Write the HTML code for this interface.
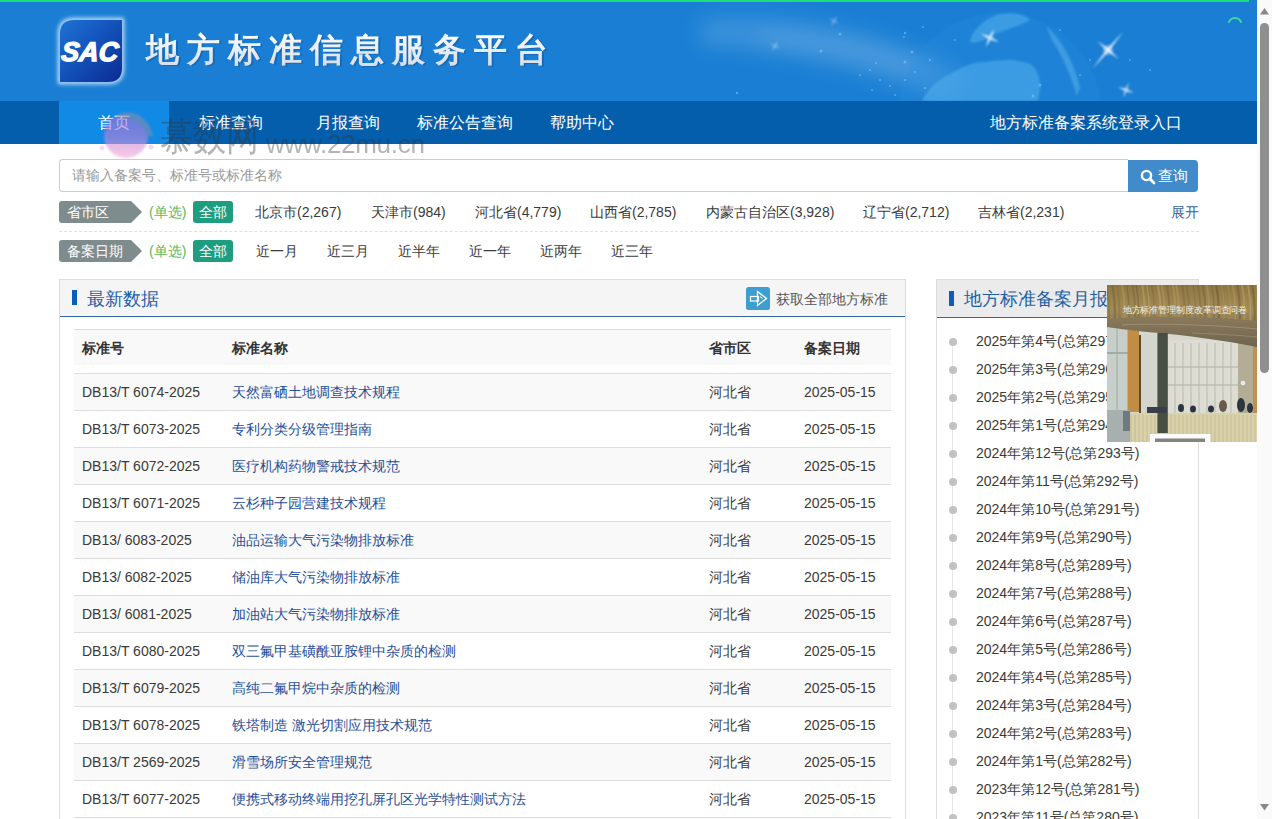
<!DOCTYPE html>
<html><head><meta charset="utf-8">
<style>
*{box-sizing:border-box;margin:0;padding:0}
html,body{width:1272px;height:819px;overflow:hidden;background:#fff}
body{font-family:"Liberation Sans",sans-serif;font-size:14px;color:#333;position:relative}
.abs{position:absolute}
#hdr{position:absolute;left:0;top:0;width:1257px;height:101px;background:#1a7fd4;overflow:hidden}
#topbar{position:absolute;left:0;top:0;width:1249px;height:2px;background:#22dc7c}
#nav{position:absolute;left:0;top:101px;width:1257px;height:43px;background:#045eab}
#nav .it{position:absolute;top:0;height:43px;line-height:44px;color:#fff;font-size:16px;white-space:nowrap}
#nav .act{background:#118ae6}
#sb{position:absolute;left:1257px;top:0;width:15px;height:819px;background:#fafafa}
#sbthumb{position:absolute;left:1260px;top:23px;width:9px;height:350px;background:#8f8f8f;border-radius:5px}
.search{position:absolute;left:59px;top:159px;width:1069px;height:33px;border:1px solid #ccc;border-right:none;border-radius:4px 0 0 4px;color:#999;font-size:14px;line-height:31px;padding-left:12px}
.sbtn{position:absolute;left:1128px;top:160px;width:70px;height:32px;background:#428bca;border-radius:0 4px 4px 0;color:#fff;font-size:14px;line-height:33px}
.tag{position:absolute;height:22px;line-height:22px;background:#7f8c8d;color:#fff;font-size:14px;padding-left:8px;border-radius:3px 0 0 3px}
.tag:after{content:"";position:absolute;right:-11px;top:0;border-left:11px solid #7f8c8d;border-top:11px solid transparent;border-bottom:11px solid transparent}
.dan{position:absolute;color:#5cb85c;font-size:14px;line-height:22px}
.all{position:absolute;width:40px;height:22px;line-height:22px;background:#1f9e7f;color:#fff;border-radius:3px;text-align:center;font-size:14px}
.fi{position:absolute;font-size:14px;line-height:22px;color:#3a3a3a;white-space:nowrap}
.dash{position:absolute;left:59px;top:231px;width:1140px;height:0;border-top:1px dashed #e0e0e0}
.panel{position:absolute;top:279px;border:1px solid #ddd;border-bottom:none;height:560px}
.ph{position:absolute;left:0;top:0;right:0;height:38px;border-bottom:1px solid #30679f}
.pbar{position:absolute;width:5px;height:15px;background:#0d5db8}
.ptitle{position:absolute;font-size:18px;color:#1d5fa6;line-height:24px;white-space:nowrap}
table{position:absolute;left:14px;top:49px;width:817px;border-collapse:collapse}
.row{position:absolute;left:14px;width:817px;height:37px;border-top:1px solid #ddd}
.row span{position:absolute;top:0;line-height:36px;white-space:nowrap;font-size:14px}
.row .c1{left:8px;color:#3a3a3a}
.row .c2{left:158px;color:#1f5098}
.row .c3{left:635px;color:#3a3a3a}
.row .c4{left:730px;color:#3a3a3a}
.odd{background:#f9f9f9}
.thead{position:absolute;left:14px;top:49px;width:817px;height:36px;background:#f9f9f9;border-top:1px solid #ddd}
.thead span{position:absolute;top:0;line-height:36px;font-weight:bold;font-size:14px;color:#333}
.vline{position:absolute;left:15px;top:62px;width:1px;height:520px;background:#e6e6e6}
.tl{position:absolute;font-size:14px;color:#3a3a3a;white-space:nowrap;line-height:20px}
.wmt{position:absolute;color:#333;opacity:0.36;white-space:nowrap;font-weight:300}
.dot{position:absolute;width:8px;height:8px;border-radius:4px;background:#c2c2c2}
</style></head><body>
<div id="hdr">
  <svg width="1257" height="101" style="position:absolute;left:0;top:0">
    <defs>
      <linearGradient id="streak" x1="0" y1="0" x2="1" y2="0.3">
        <stop offset="0" stop-color="#fff" stop-opacity="0"/>
        <stop offset="0.5" stop-color="#fff" stop-opacity="0.12"/>
        <stop offset="1" stop-color="#fff" stop-opacity="0"/>
      </linearGradient>
      <radialGradient id="glob" cx="0.4" cy="0.6" r="0.6">
        <stop offset="0" stop-color="#5ab4f0" stop-opacity="0.55"/>
        <stop offset="1" stop-color="#3a9ae8" stop-opacity="0.15"/>
      </radialGradient>
      <radialGradient id="spark" cx="0.5" cy="0.5" r="0.5">
        <stop offset="0" stop-color="#fff" stop-opacity="1"/>
        <stop offset="1" stop-color="#fff" stop-opacity="0"/>
      </radialGradient>
      <linearGradient id="logog" x1="0" y1="0" x2="1" y2="1">
        <stop offset="0" stop-color="#1e74d6"/>
        <stop offset="0.5" stop-color="#1250b8"/>
        <stop offset="1" stop-color="#0c2a92"/>
      </linearGradient>
      <linearGradient id="titleg" x1="0" y1="0" x2="0" y2="1">
        <stop offset="0" stop-color="#ffffff"/>
        <stop offset="1" stop-color="#d6dde6"/>
      </linearGradient>
    </defs>
    <filter id="soft" x="-50%" y="-50%" width="200%" height="200%"><feGaussianBlur stdDeviation="10"/></filter>
    <filter id="soft3" x="-50%" y="-50%" width="200%" height="200%"><feGaussianBlur stdDeviation="1.2"/></filter>
    <path d="M700 20 C 780 10, 880 30, 960 70 L 950 101 C 870 70, 780 50, 700 45 Z" fill="#fff" opacity="0.14" filter="url(#soft)"/>
    <path d="M760 30 C 820 30, 880 45, 930 65 L 925 80 C 870 60, 810 48, 760 45 Z" fill="#fff" opacity="0.08" filter="url(#soft)"/>
    <circle cx="1000" cy="115" r="102" fill="#2a8fe0" opacity="0.25" filter="url(#soft3)"/>
    <g fill="#56b2ee" opacity="0.55" filter="url(#soft3)">
      <path d="M922 101 C 928 88, 938 80, 950 74 C 960 68, 972 62, 985 62 C 1000 60, 1015 58, 1030 64 C 1040 70, 1042 85, 1038 101 Z"/>
      <path d="M970 42 C 972 30, 985 18, 1000 14 C 1012 12, 1025 14, 1030 20 C 1020 26, 1005 30, 995 34 C 985 40, 978 44, 970 42 Z"/>
      <path d="M1046 26 C 1062 40, 1074 62, 1080 88 L 1077 96 C 1070 72, 1060 52, 1052 40 Z"/>
    </g>
    <g fill="#fff" filter="url(#soft3)">
      <path d="M990 28 L991.5 36.5 L1000 38 L991.5 39.5 L990 48 L988.5 39.5 L980 38 L988.5 36.5 Z" opacity="0.75" transform="rotate(25 990 38)"/>
      <path d="M1108 36 L1109.3 48.7 L1132 50 L1109.3 51.3 L1108 64 L1106.7 51.3 L1084 50 L1106.7 48.7 Z" opacity="0.85" transform="rotate(-50 1108 50)"/>
      <path d="M1126 82 L1127 88.5 L1134 90 L1127 91.5 L1126 98 L1125 91.5 L1118 90 L1125 88.5 Z" opacity="0.7" transform="rotate(20 1126 90)"/>
      <path d="M775 40 L776 45 L781 46 L776 47 L775 52 L774 47 L769 46 L774 45 Z" opacity="0.35" transform="rotate(30 775 46)"/>
      <path d="M834 15 L835 20 L840 21 L835 22 L834 27 L833 22 L828 21 L833 20 Z" opacity="0.35" transform="rotate(30 834 21)"/>
    </g>
    <circle cx="1108" cy="50" r="5" fill="#fff" opacity="0.35" filter="url(#soft3)"/>
    <g fill="#9cd4ff" opacity="0.45">
      <circle cx="821" cy="51" r="1.5"/><circle cx="840" cy="34" r="1.5"/><circle cx="905" cy="33" r="1.2"/><circle cx="912" cy="52" r="1.5"/>
      <circle cx="905" cy="62" r="1.5"/><circle cx="876" cy="63" r="1"/><circle cx="870" cy="70" r="1"/><circle cx="860" cy="75" r="1"/>
      <circle cx="880" cy="80" r="1"/><circle cx="890" cy="86" r="1"/><circle cx="872" cy="90" r="1"/><circle cx="895" cy="95" r="1"/>
      <circle cx="905" cy="80" r="1"/><circle cx="915" cy="72" r="1"/><circle cx="925" cy="88" r="1.2"/><circle cx="737" cy="93" r="1.2"/>
      <circle cx="904" cy="37" r="1"/><circle cx="930" cy="60" r="1.2"/><circle cx="1040" cy="85" r="1.5"/><circle cx="1033" cy="96" r="1.5"/>
      <circle cx="1090" cy="60" r="1"/><circle cx="1080" cy="75" r="1"/><circle cx="1130" cy="60" r="1"/><circle cx="1150" cy="70" r="1"/>
      <circle cx="923" cy="27" r="1"/><circle cx="955" cy="40" r="1"/><circle cx="1060" cy="30" r="1"/>
    </g>
    <!-- logo glow -->
    <filter id="blur2" x="-30%" y="-30%" width="160%" height="160%"><feGaussianBlur stdDeviation="2"/></filter>
    <path d="M74 20 L122 20 L122 68 Q122 82 108 82 L60 82 L60 34 Q60 20 74 20 Z" fill="none" stroke="#e8f6ff" stroke-width="4" filter="url(#blur2)" opacity="0.9"/>
    <path d="M74 20 L122 20 L122 68 Q122 82 108 82 L60 82 L60 34 Q60 20 74 20 Z" fill="url(#logog)"/>
    <text x="63" y="61.5" font-family="Liberation Sans" font-weight="bold" font-style="italic" font-size="27" fill="#fff" stroke="#fff" stroke-width="1.3" textLength="57" lengthAdjust="spacingAndGlyphs" transform="skewX(-6) translate(4,0)">SAC</text>
    <text x="147.5" y="62" font-size="33" font-weight="bold" fill="#00306a" opacity="0.25" letter-spacing="8" font-family="Liberation Sans">地方标准信息服务平台</text>
    <text x="146" y="60.5" font-size="33" font-weight="bold" fill="url(#titleg)" letter-spacing="8" font-family="Liberation Sans">地方标准信息服务平台</text>
    <path d="M1229 22 A 6.5 6.5 0 0 1 1241 22" fill="none" stroke="#3bd6a2" stroke-width="2" stroke-linecap="round"/>
  </svg>
  <div id="topbar"></div>
</div>
<div id="nav">
  <div class="it act" style="left:59px;width:110px;text-align:center;padding-right:0">首页</div>
  <div class="it" style="left:199px">标准查询</div>
  <div class="it" style="left:316px">月报查询</div>
  <div class="it" style="left:417px">标准公告查询</div>
  <div class="it" style="left:550px">帮助中心</div>
  <div class="it" style="left:990px">地方标准备案系统登录入口</div>
</div>
<div id="sb"></div>
<div id="sbthumb"></div>
<svg width="15" height="819" style="position:absolute;left:1257px;top:0"><path d="M3 14.5 L7.5 8 L12 14.5 Z" fill="#888"/><path d="M3 804 L7.5 810.5 L12 804 Z" fill="#888"/></svg>

<div class="search">请输入备案号、标准号或标准名称</div>
<div class="sbtn"><svg width="16" height="16" style="position:absolute;left:12px;top:8.5px"><circle cx="6.5" cy="6.5" r="4.6" fill="none" stroke="#fff" stroke-width="2.4"/><path d="M9.8 9.8 L14 14" stroke="#fff" stroke-width="2.8" stroke-linecap="round"/></svg><span style="position:absolute;left:30px;top:0px;font-size:14.5px;line-height:33px">查询</span></div>

<div class="tag" style="left:59px;top:201px;width:72px">省市区</div>
<div class="dan" style="left:149px;top:201px">(单选)</div>
<div class="all" style="left:193px;top:201px">全部</div>
<div class="fi" style="left:255px;top:201px">北京市(2,267)</div>
<div class="fi" style="left:371px;top:201px">天津市(984)</div>
<div class="fi" style="left:475px;top:201px">河北省(4,779)</div>
<div class="fi" style="left:590px;top:201px">山西省(2,785)</div>
<div class="fi" style="left:706px;top:201px">内蒙古自治区(3,928)</div>
<div class="fi" style="left:863px;top:201px">辽宁省(2,712)</div>
<div class="fi" style="left:978px;top:201px">吉林省(2,231)</div>
<div class="fi" style="left:1171px;top:201px;color:#356699">展开</div>
<div class="dash"></div>

<div class="tag" style="left:59px;top:240px;width:72px">备案日期</div>
<div class="dan" style="left:149px;top:240px">(单选)</div>
<div class="all" style="left:193px;top:240px">全部</div>
<div class="fi" style="left:256px;top:240px">近一月</div>
<div class="fi" style="left:327px;top:240px">近三月</div>
<div class="fi" style="left:398px;top:240px">近半年</div>
<div class="fi" style="left:469px;top:240px">近一年</div>
<div class="fi" style="left:540px;top:240px">近两年</div>
<div class="fi" style="left:611px;top:240px">近三年</div>

<div class="panel" style="left:59px;width:847px">
  <div class="ph" style="background:#f5f5f5;height:37px">
    <div class="pbar" style="left:12px;top:10px"></div>
    <div class="ptitle" style="left:27px;top:7px">最新数据</div>
    <svg width="25" height="24" style="position:absolute;left:686px;top:7px"><rect x="0" y="0" width="24" height="23" rx="2.5" fill="#3d9fd1"/><rect x="4.5" y="9.5" width="8" height="4.5" fill="none" stroke="#fff" stroke-width="1.2"/><path d="M11.5 4.5 L20.5 11.5 L11.5 18.5 Z" fill="none" stroke="#fff" stroke-width="1.3"/><path d="M14 9.5 L16.5 11.5" stroke="#fff" stroke-width="1"/></svg><div class="ptitle" style="left:716px;top:7px;font-size:14px;color:#555">获取全部地方标准</div>
  </div>
<div class="thead"><span style="left:8px">标准号</span><span style="left:158px">标准名称</span><span style="left:635px">省市区</span><span style="left:730px">备案日期</span></div>
<div class="row odd" style="top:93px"><span class="c1">DB13/T 6074-2025</span><span class="c2">天然富硒土地调查技术规程</span><span class="c3">河北省</span><span class="c4">2025-05-15</span></div>
<div class="row" style="top:130px"><span class="c1">DB13/T 6073-2025</span><span class="c2">专利分类分级管理指南</span><span class="c3">河北省</span><span class="c4">2025-05-15</span></div>
<div class="row odd" style="top:167px"><span class="c1">DB13/T 6072-2025</span><span class="c2">医疗机构药物警戒技术规范</span><span class="c3">河北省</span><span class="c4">2025-05-15</span></div>
<div class="row" style="top:204px"><span class="c1">DB13/T 6071-2025</span><span class="c2">云杉种子园营建技术规程</span><span class="c3">河北省</span><span class="c4">2025-05-15</span></div>
<div class="row odd" style="top:241px"><span class="c1">DB13/ 6083-2025</span><span class="c2">油品运输大气污染物排放标准</span><span class="c3">河北省</span><span class="c4">2025-05-15</span></div>
<div class="row" style="top:278px"><span class="c1">DB13/ 6082-2025</span><span class="c2">储油库大气污染物排放标准</span><span class="c3">河北省</span><span class="c4">2025-05-15</span></div>
<div class="row odd" style="top:315px"><span class="c1">DB13/ 6081-2025</span><span class="c2">加油站大气污染物排放标准</span><span class="c3">河北省</span><span class="c4">2025-05-15</span></div>
<div class="row" style="top:352px"><span class="c1">DB13/T 6080-2025</span><span class="c2">双三氟甲基磺酰亚胺锂中杂质的检测</span><span class="c3">河北省</span><span class="c4">2025-05-15</span></div>
<div class="row odd" style="top:389px"><span class="c1">DB13/T 6079-2025</span><span class="c2">高纯二氟甲烷中杂质的检测</span><span class="c3">河北省</span><span class="c4">2025-05-15</span></div>
<div class="row" style="top:426px"><span class="c1">DB13/T 6078-2025</span><span class="c2">铁塔制造 激光切割应用技术规范</span><span class="c3">河北省</span><span class="c4">2025-05-15</span></div>
<div class="row odd" style="top:463px"><span class="c1">DB13/T 2569-2025</span><span class="c2">滑雪场所安全管理规范</span><span class="c3">河北省</span><span class="c4">2025-05-15</span></div>
<div class="row" style="top:500px"><span class="c1">DB13/T 6077-2025</span><span class="c2">便携式移动终端用挖孔屏孔区光学特性测试方法</span><span class="c3">河北省</span><span class="c4">2025-05-15</span></div>
<div class="row odd" style="top:537px"><span class="c1">DB13/T 6076-2025</span><span class="c2">测试</span><span class="c3">河北省</span><span class="c4">2025-05-15</span></div>
</div>

<div class="panel" style="left:936px;width:263px">
  <div class="ph" style="background:#ebebeb">
    <div class="pbar" style="left:12px;top:11px"></div>
    <div class="ptitle" style="left:27px;top:7px">地方标准备案月报</div>
  </div>
<div class="vline"></div>
<div class="dot" style="left:12px;top:58px"></div><div class="tl" style="left:39px;top:51px">2025年第4号(总第297号)</div>
<div class="dot" style="left:12px;top:86px"></div><div class="tl" style="left:39px;top:79px">2025年第3号(总第296号)</div>
<div class="dot" style="left:12px;top:114px"></div><div class="tl" style="left:39px;top:107px">2025年第2号(总第295号)</div>
<div class="dot" style="left:12px;top:142px"></div><div class="tl" style="left:39px;top:135px">2025年第1号(总第294号)</div>
<div class="dot" style="left:12px;top:170px"></div><div class="tl" style="left:39px;top:163px">2024年第12号(总第293号)</div>
<div class="dot" style="left:12px;top:198px"></div><div class="tl" style="left:39px;top:191px">2024年第11号(总第292号)</div>
<div class="dot" style="left:12px;top:226px"></div><div class="tl" style="left:39px;top:219px">2024年第10号(总第291号)</div>
<div class="dot" style="left:12px;top:254px"></div><div class="tl" style="left:39px;top:247px">2024年第9号(总第290号)</div>
<div class="dot" style="left:12px;top:282px"></div><div class="tl" style="left:39px;top:275px">2024年第8号(总第289号)</div>
<div class="dot" style="left:12px;top:310px"></div><div class="tl" style="left:39px;top:303px">2024年第7号(总第288号)</div>
<div class="dot" style="left:12px;top:338px"></div><div class="tl" style="left:39px;top:331px">2024年第6号(总第287号)</div>
<div class="dot" style="left:12px;top:366px"></div><div class="tl" style="left:39px;top:359px">2024年第5号(总第286号)</div>
<div class="dot" style="left:12px;top:394px"></div><div class="tl" style="left:39px;top:387px">2024年第4号(总第285号)</div>
<div class="dot" style="left:12px;top:422px"></div><div class="tl" style="left:39px;top:415px">2024年第3号(总第284号)</div>
<div class="dot" style="left:12px;top:450px"></div><div class="tl" style="left:39px;top:443px">2024年第2号(总第283号)</div>
<div class="dot" style="left:12px;top:478px"></div><div class="tl" style="left:39px;top:471px">2024年第1号(总第282号)</div>
<div class="dot" style="left:12px;top:506px"></div><div class="tl" style="left:39px;top:499px">2023年第12号(总第281号)</div>
<div class="dot" style="left:12px;top:534px"></div><div class="tl" style="left:39px;top:527px">2023年第11号(总第280号)</div>
</div>


<!-- overlay ad image -->
<div id="ad" style="position:absolute;left:1107px;top:285px;width:150px;height:157px;overflow:hidden;background:#cfd2c8">
<svg width="150" height="157" style="position:absolute;left:0;top:0">
  <defs>
    <linearGradient id="ceil" x1="0" y1="0" x2="0" y2="1">
      <stop offset="0" stop-color="#8f7744"/>
      <stop offset="0.6" stop-color="#a38b56"/>
      <stop offset="1" stop-color="#8b7a58"/>
    </linearGradient>
    <linearGradient id="lip" x1="0" y1="0" x2="0" y2="1">
      <stop offset="0" stop-color="#8a7a5c"/>
      <stop offset="1" stop-color="#6f6450"/>
    </linearGradient>
  </defs>
  <rect x="0" y="0" width="150" height="157" fill="#d6d8ce"/>
  <rect x="0" y="40" width="21" height="90" fill="#c6cfc9"/>
  <line x1="0" y1="68" x2="21" y2="68" stroke="#8a948c" stroke-width="1.2"/><line x1="10" y1="40" x2="10" y2="130" stroke="#a0aaa2" stroke-width="1"/>
  <rect x="20.5" y="45" width="11.5" height="82" fill="#c08d42"/>
  <rect x="32" y="50" width="2" height="78" fill="#5a4a30"/>
  <rect x="34" y="50" width="17" height="78" fill="#d2d6cc"/>
  <rect x="61" y="55" width="70" height="73" fill="#dcdcd2"/>
  <line x1="68" y1="58" x2="68" y2="128" stroke="#b9bcb0" stroke-width="1"/>
  <line x1="76" y1="58" x2="76" y2="128" stroke="#b9bcb0" stroke-width="1"/>
  <line x1="84" y1="58" x2="84" y2="128" stroke="#b9bcb0" stroke-width="1"/>
  <line x1="92" y1="58" x2="92" y2="128" stroke="#b9bcb0" stroke-width="1"/>
  <line x1="100" y1="58" x2="100" y2="128" stroke="#b9bcb0" stroke-width="1"/>
  <line x1="108" y1="58" x2="108" y2="128" stroke="#b9bcb0" stroke-width="1"/>
  <line x1="116" y1="58" x2="116" y2="128" stroke="#b9bcb0" stroke-width="1"/>
  <line x1="124" y1="58" x2="124" y2="128" stroke="#b9bcb0" stroke-width="1"/>
  <line x1="61" y1="82" x2="131" y2="82" stroke="#b0b2a4" stroke-width="1.2"/>
  <line x1="61" y1="100" x2="131" y2="100" stroke="#b0b2a4" stroke-width="1.2"/>
  <rect x="131" y="55" width="15" height="75" fill="#b3ad95"/>
  <rect x="146" y="55" width="4" height="75" fill="#c09050"/>
  <circle cx="136" cy="98" r="3" fill="#e8e8e0" stroke="#888" stroke-width="0.6"/>
  <path d="M0 0 H150 V40 H0 Z" fill="url(#ceil)"/>
  <path d="M-0.5 0 Q 3.5 20 1.5 40" stroke="#7a6236" stroke-width="1.7" fill="none" opacity="0.36"/>
  <path d="M5.3 0 Q 9.3 20 7.3 40" stroke="#6a5530" stroke-width="2.1" fill="none" opacity="0.43"/>
  <path d="M9.9 0 Q 13.9 20 11.9 40" stroke="#7a6236" stroke-width="1.9" fill="none" opacity="0.31"/>
  <path d="M15.1 0 Q 19.1 20 17.1 40" stroke="#c2a86e" stroke-width="2.0" fill="none" opacity="0.37"/>
  <path d="M19.5 0 Q 23.5 20 21.5 40" stroke="#7a6236" stroke-width="1.6" fill="none" opacity="0.51"/>
  <path d="M25.5 0 Q 29.5 20 27.5 40" stroke="#6a5530" stroke-width="2.1" fill="none" opacity="0.30"/>
  <path d="M29.1 0 Q 33.1 20 31.1 40" stroke="#6a5530" stroke-width="1.3" fill="none" opacity="0.50"/>
  <path d="M35.2 0 Q 39.2 20 37.2 40" stroke="#c2a86e" stroke-width="2.1" fill="none" opacity="0.46"/>
  <path d="M39.8 0 Q 43.8 20 41.8 40" stroke="#c2a86e" stroke-width="1.2" fill="none" opacity="0.54"/>
  <path d="M44.7 0 Q 48.7 20 46.7 40" stroke="#6a5530" stroke-width="1.3" fill="none" opacity="0.29"/>
  <path d="M50.9 0 Q 54.9 20 52.9 40" stroke="#c2a86e" stroke-width="2.0" fill="none" opacity="0.48"/>
  <path d="M54.8 0 Q 58.8 20 56.8 40" stroke="#c2a86e" stroke-width="1.6" fill="none" opacity="0.42"/>
  <path d="M59.8 0 Q 63.8 20 61.8 40" stroke="#7a6236" stroke-width="1.8" fill="none" opacity="0.52"/>
  <path d="M65.9 0 Q 69.9 20 67.9 40" stroke="#b39a62" stroke-width="1.8" fill="none" opacity="0.55"/>
  <path d="M69.3 0 Q 73.3 20 71.3 40" stroke="#b39a62" stroke-width="2.1" fill="none" opacity="0.54"/>
  <path d="M75.1 0 Q 79.1 20 77.1 40" stroke="#7a6236" stroke-width="2.2" fill="none" opacity="0.44"/>
  <path d="M79.5 0 Q 83.5 20 81.5 40" stroke="#6a5530" stroke-width="2.0" fill="none" opacity="0.27"/>
  <path d="M86.0 0 Q 90.0 20 88.0 40" stroke="#6a5530" stroke-width="1.1" fill="none" opacity="0.35"/>
  <path d="M90.8 0 Q 94.8 20 92.8 40" stroke="#6a5530" stroke-width="1.9" fill="none" opacity="0.34"/>
  <path d="M95.7 0 Q 99.7 20 97.7 40" stroke="#6a5530" stroke-width="1.9" fill="none" opacity="0.43"/>
  <path d="M99.8 0 Q 103.8 20 101.8 40" stroke="#b39a62" stroke-width="2.1" fill="none" opacity="0.42"/>
  <path d="M104.6 0 Q 108.6 20 106.6 40" stroke="#7a6236" stroke-width="1.4" fill="none" opacity="0.55"/>
  <path d="M109.2 0 Q 113.2 20 111.2 40" stroke="#6a5530" stroke-width="2.2" fill="none" opacity="0.53"/>
  <path d="M114.6 0 Q 118.6 20 116.6 40" stroke="#b39a62" stroke-width="1.1" fill="none" opacity="0.30"/>
  <path d="M120.7 0 Q 124.7 20 122.7 40" stroke="#b39a62" stroke-width="1.2" fill="none" opacity="0.36"/>
  <path d="M125.7 0 Q 129.7 20 127.7 40" stroke="#c2a86e" stroke-width="1.6" fill="none" opacity="0.39"/>
  <path d="M130.3 0 Q 134.3 20 132.3 40" stroke="#6a5530" stroke-width="2.1" fill="none" opacity="0.44"/>
  <path d="M135.0 0 Q 139.0 20 137.0 40" stroke="#c2a86e" stroke-width="1.9" fill="none" opacity="0.44"/>
  <path d="M140.9 0 Q 144.9 20 142.9 40" stroke="#c2a86e" stroke-width="1.6" fill="none" opacity="0.54"/>
  <path d="M145.1 0 Q 149.1 20 147.1 40" stroke="#6a5530" stroke-width="2.2" fill="none" opacity="0.49"/>
  <path d="M149.6 0 Q 153.6 20 151.6 40" stroke="#c2a86e" stroke-width="1.8" fill="none" opacity="0.43"/>
  <path d="M0 34 C 40 30, 110 32, 150 36 L150 62 C 120 56, 80 50, 40 47 C 20 45, 8 43, 0 42 Z" fill="url(#lip)"/>
  <path d="M15 40 C 50 38, 110 40, 150 44" stroke="#a89878" stroke-width="1" fill="none" opacity="0.7"/>
  <path d="M85 48 C 110 49, 130 50, 150 52" stroke="#b0a080" stroke-width="0.8" fill="none" opacity="0.6"/>
  <rect x="50.4" y="48" width="10.4" height="100" fill="#474e44"/>
  <g fill="#2e3340">
    <ellipse cx="74" cy="123" rx="3" ry="4"/><ellipse cx="86" cy="124" rx="3" ry="3.5"/><ellipse cx="104" cy="124" rx="3" ry="3.5"/>
    <ellipse cx="116" cy="121" rx="4" ry="6" fill="#6a5a4a"/><ellipse cx="134" cy="120" rx="4" ry="7"/><ellipse cx="143" cy="123" rx="3" ry="5"/>
    <rect x="40" y="122" width="20" height="6" fill="#3a3e4a"/>
  </g>
  <rect x="21" y="128" width="129" height="29" fill="#d9d1aa"/>
  <line x1="24" y1="130" x2="24" y2="157" stroke="#bfb48c" stroke-width="1" opacity="0.8"/>
  <line x1="28" y1="130" x2="28" y2="157" stroke="#bfb48c" stroke-width="1" opacity="0.8"/>
  <line x1="32" y1="130" x2="32" y2="157" stroke="#bfb48c" stroke-width="1" opacity="0.8"/>
  <line x1="36" y1="130" x2="36" y2="157" stroke="#bfb48c" stroke-width="1" opacity="0.8"/>
  <line x1="40" y1="130" x2="40" y2="157" stroke="#bfb48c" stroke-width="1" opacity="0.8"/>
  <line x1="44" y1="130" x2="44" y2="157" stroke="#bfb48c" stroke-width="1" opacity="0.8"/>
  <line x1="48" y1="130" x2="48" y2="157" stroke="#bfb48c" stroke-width="1" opacity="0.8"/>
  <line x1="52" y1="130" x2="52" y2="157" stroke="#bfb48c" stroke-width="1" opacity="0.8"/>
  <line x1="56" y1="130" x2="56" y2="157" stroke="#bfb48c" stroke-width="1" opacity="0.8"/>
  <line x1="60" y1="130" x2="60" y2="157" stroke="#bfb48c" stroke-width="1" opacity="0.8"/>
  <line x1="64" y1="130" x2="64" y2="157" stroke="#bfb48c" stroke-width="1" opacity="0.8"/>
  <line x1="68" y1="130" x2="68" y2="157" stroke="#bfb48c" stroke-width="1" opacity="0.8"/>
  <line x1="72" y1="130" x2="72" y2="157" stroke="#bfb48c" stroke-width="1" opacity="0.8"/>
  <line x1="76" y1="130" x2="76" y2="157" stroke="#bfb48c" stroke-width="1" opacity="0.8"/>
  <line x1="80" y1="130" x2="80" y2="157" stroke="#bfb48c" stroke-width="1" opacity="0.8"/>
  <line x1="84" y1="130" x2="84" y2="157" stroke="#bfb48c" stroke-width="1" opacity="0.8"/>
  <line x1="88" y1="130" x2="88" y2="157" stroke="#bfb48c" stroke-width="1" opacity="0.8"/>
  <line x1="92" y1="130" x2="92" y2="157" stroke="#bfb48c" stroke-width="1" opacity="0.8"/>
  <line x1="96" y1="130" x2="96" y2="157" stroke="#bfb48c" stroke-width="1" opacity="0.8"/>
  <line x1="100" y1="130" x2="100" y2="157" stroke="#bfb48c" stroke-width="1" opacity="0.8"/>
  <line x1="104" y1="130" x2="104" y2="157" stroke="#bfb48c" stroke-width="1" opacity="0.8"/>
  <line x1="108" y1="130" x2="108" y2="157" stroke="#bfb48c" stroke-width="1" opacity="0.8"/>
  <line x1="112" y1="130" x2="112" y2="157" stroke="#bfb48c" stroke-width="1" opacity="0.8"/>
  <line x1="116" y1="130" x2="116" y2="157" stroke="#bfb48c" stroke-width="1" opacity="0.8"/>
  <line x1="120" y1="130" x2="120" y2="157" stroke="#bfb48c" stroke-width="1" opacity="0.8"/>
  <line x1="124" y1="130" x2="124" y2="157" stroke="#bfb48c" stroke-width="1" opacity="0.8"/>
  <line x1="128" y1="130" x2="128" y2="157" stroke="#bfb48c" stroke-width="1" opacity="0.8"/>
  <line x1="132" y1="130" x2="132" y2="157" stroke="#bfb48c" stroke-width="1" opacity="0.8"/>
  <line x1="136" y1="130" x2="136" y2="157" stroke="#bfb48c" stroke-width="1" opacity="0.8"/>
  <line x1="140" y1="130" x2="140" y2="157" stroke="#bfb48c" stroke-width="1" opacity="0.8"/>
  <line x1="144" y1="130" x2="144" y2="157" stroke="#bfb48c" stroke-width="1" opacity="0.8"/>
  <line x1="148" y1="130" x2="148" y2="157" stroke="#bfb48c" stroke-width="1" opacity="0.8"/>
  <rect x="0" y="125" width="23" height="32" fill="#a7b0ae"/>
  <rect x="16" y="126" width="7" height="20" fill="#6d7a80"/>
  <rect x="50.4" y="128" width="10.4" height="20" fill="#474e44"/>
  <rect x="43" y="149" width="60.5" height="8" fill="#fbfbfb"/>
  <rect x="48" y="153.5" width="50" height="3.5" fill="#333" opacity="0.6"/>
</svg>
<div style="position:absolute;left:0;top:19px;width:150px;text-align:center;font-size:9.2px;color:#f4f0e8;white-space:nowrap;letter-spacing:-0.1px;padding-left:6px">地方标准管理制度改革调查问卷</div>
</div>

<!-- watermark -->
<div style="position:absolute;left:95px;top:105px;width:64px;height:60px;opacity:0.6">
<svg width="64" height="60">
  <defs><linearGradient id="wm" x1="0" y1="0" x2="0" y2="1"><stop offset="0" stop-color="#9a70d8"/><stop offset="0.5" stop-color="#c080d8"/><stop offset="1" stop-color="#f4a8d8"/></linearGradient>
  <filter id="wmb"><feGaussianBlur stdDeviation="1"/></filter></defs>
  <circle cx="31" cy="31" r="22" fill="url(#wm)" filter="url(#wmb)"/>
  <path d="M22 10 C 38 2, 56 14, 58 32 L 52 30 C 48 18, 36 12, 26 14 Z" fill="#8c8ca8" filter="url(#wmb)"/>
  <circle cx="7" cy="43" r="2.5" fill="#f0a8d8" opacity="0.7"/><circle cx="56" cy="42" r="2.5" fill="#f0a8d8" opacity="0.8"/>
</svg>
</div>
<div class="wmt" style="left:160px;top:112px;font-size:33px;line-height:44px;transform:scaleY(1.15);transform-origin:0 0">慕数网</div>
<div class="wmt" style="left:266px;top:126px;font-size:26px;line-height:36px;letter-spacing:-0.3px">www.22mu.cn</div>

</body></html>
